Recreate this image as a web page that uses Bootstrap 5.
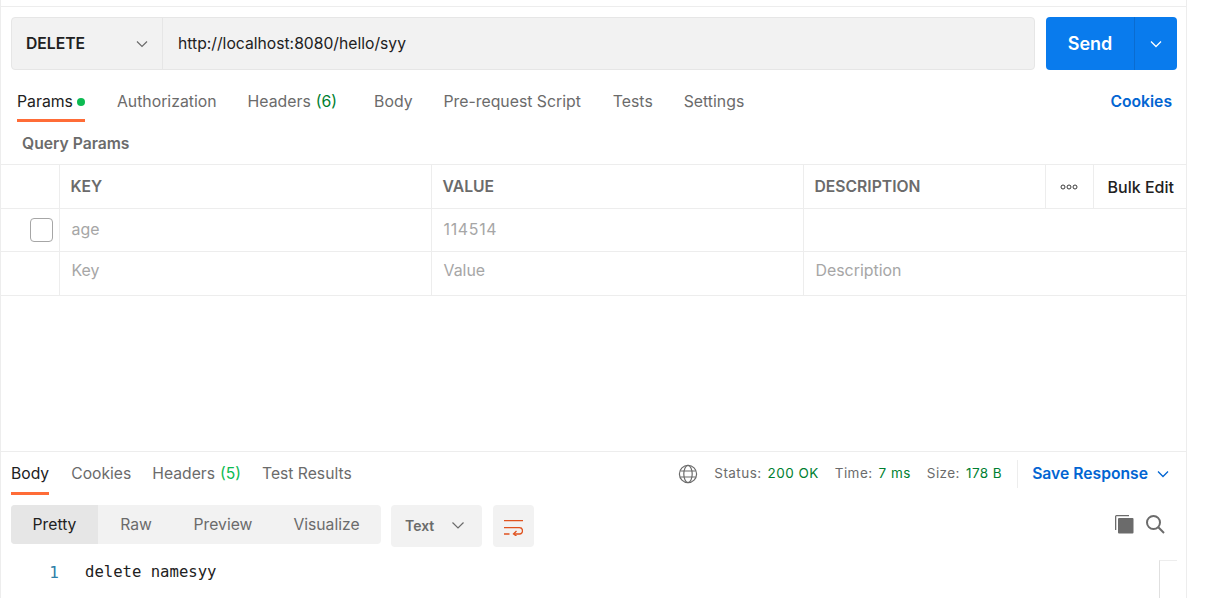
<!DOCTYPE html>
<html lang="en">
<head>
    <meta charset="UTF-8">
    <meta name="viewport" content="width=device-width, initial-scale=1.0">
    <title>Postman</title>
    <link href="https://cdn.jsdelivr.net/npm/bootstrap@5.3.0/dist/css/bootstrap.min.css" rel="stylesheet">
    <style>
        html, body { height: 100%; overflow: hidden; background: #fff; }
        body { font-family: Inter, "Noto Sans", sans-serif; font-size: 15.7px; color: #6b6b6b; }
        svg { display: block; flex: none; }

        .app-frame { width: 1187px; height: 598px; overflow: hidden; border-left: 1px solid #ededed; border-right: 1px solid #ededed; }
        .top-strip { height: 7px; border-bottom: 1px solid #ededed; margin-left: -1px; }

        .url-row { height: 53px; margin: 10px 9px 0 10px; }
        .url-box { background: #f2f2f2; border: 1px solid #e6e6e6; border-radius: 4px; width: 1024px; }
        .method-pick { width: 151px; border-right: 1px solid #e6e6e6; padding: 0 13px 0 14px; color: #212121; font-weight: 600; }
        .url-text { padding-left: 15px; color: #212121; }
        .send-btn { width: 131px; margin-left: 11px; background: #097bed; color: #fff; border-radius: 4px; font-size: 18px; font-weight: 600; }
        .send-main { width: 89px; border-right: 1px solid #0a6cd0; }

        .req-tabs { height: 52px; padding: 0 14px 0 16px; font-size: 15.8px; }
        .tab-item { display: flex; align-items: center; height: 100%; position: relative; padding-top: 12px; padding-bottom: 0; white-space: nowrap; }
        .tab-on { color: #212121; }
        .tab-on::after { content: ""; position: absolute; left: 0; right: 0; bottom: 0; height: 3px; background: #ff6c37; }
        .tab-auth { margin-left: 32px; }
        .tab-gap { margin-left: 31px; }
        .tab-gap-wide { margin-left: 37px; }
        .tab-gap-pre { margin-left: 32px; }
        .green-dot { width: 8px; height: 8px; border-radius: 50%; background: #0cbb52; margin-left: 4px; }
        .count-dark { color: #007f31; margin-left: 5px; }
        .count-light { color: #0cbb52; margin-left: 5px; }
        .cookies-link { color: #0265d2; font-weight: 600; margin-left: auto; padding-top: 12px; font-size: 15.7px; }

        .query-title { height: 42px; padding: 10px 0 0 21px; font-weight: 600; }

        .param-table { table-layout: fixed; width: 1185px; border-top: 1px solid #ededed; margin: 0; color: #6b6b6b; }
        .param-table > :not(caption) > * > * { border-color: #ededed; padding: 0 11px; vertical-align: middle; color: inherit; background: transparent; box-shadow: none; }
        .param-table td, .param-table th { border-right: 1px solid #ededed; border-bottom: 1px solid #ededed; }
        .param-table td:last-child, .param-table th:last-child { border-right: 0; }
        .param-table thead tr { height: 44px; }
        .param-table tbody tr.row-a { height: 43px; }
        .param-table tbody tr.row-b { height: 44px; }
        .param-table tbody tr.row-b td { padding-bottom: 6px; }
        .param-table th { font-weight: 600; }
        .param-table td { color: #a6a6a6; padding-left: 12px; font-size: 15.9px; }
        .param-table .num-cell { letter-spacing: .7px; }
        .param-table .bulk-cell { color: #212121; font-weight: 500; font-size: 16px; white-space: nowrap; padding: 0 0 0 14px; }
        .param-table .dots-cell { padding: 0; }
        .param-table .check-cell { padding: 0 6px 0 0; }
        .fake-check { width: 23px; height: 24px; border: 1px solid #a6a6a6; border-radius: 4px; margin-left: auto; }

        .param-spacer { height: 156px; border-bottom: 1px solid #ededed; }

        .res-tabs { height: 43px; padding: 0 16px 0 10px; }
        .res-tabs .tab-item { padding-top: 1px; padding-bottom: 0; }
        .res-tab-gap { margin-left: 22px; }
        .res-tab-gap-b { margin-left: 21px; }
        .res-meta { margin-left: auto; font-size: 13.5px; letter-spacing: .45px; }
        .globe-icon { margin-right: 16px; }
        .meta-ok { color: #007f31; margin-left: 6px; }
        .meta-pair { margin-left: 16px; }
        .meta-rule { width: 1px; height: 28px; background: #ededed; margin: 0 14px 0 15px; }
        .save-link { color: #0265d2; font-weight: 600; font-size: 15.7px; letter-spacing: 0; }

        .view-row { height: 39px; margin: 10px 10px 0 10px; }
        .seg-group { width: 370px; background: #f2f2f2; border-radius: 4px; height: 100%; }
        .seg-on { background: #e6e6e6; color: #212121; width: 87px; border-radius: 4px 0 0 4px; }
        .seg-item { text-align: center; }
        .seg-raw { width: 76px; }
        .seg-preview { width: 98px; }
        .seg-visual { width: 109px; }
        .lang-pick { width: 91px; height: 42px; background: #f2f2f2; border-radius: 4px; margin-left: 10px; padding: 0 17px 2px 14px; font-size: 14px; font-weight: 600; }
        .wrap-btn { width: 41px; height: 42px; background: #f2f2f2; border-radius: 4px; margin-left: 11px; padding-top: 4px; }
        .tool-icons { margin-left: auto; margin-right: 11px; margin-bottom: 2px; gap: 11px; }

        .code-row { margin-top: 17px; height: 40px; position: relative; font-family: "DejaVu Sans Mono", monospace; font-size: 15.6px; color: #212121; }
        .line-no { width: 58px; text-align: right; color: #2f7fa8; font-size: 16px; }
        .code-text { margin-left: 26px; white-space: pre; }
        .scroll-stub { position: absolute; right: 9px; top: -1px; width: 18px; height: 44px; border-left: 1px solid #e0e0e0; border-top: 1px solid #ededed; }
    </style>
</head>
<body>
    <div class="app-frame">
        <div class="top-strip"></div>

        <div class="url-row d-flex">
            <div class="url-box d-flex">
                <div class="method-pick d-flex align-items-center justify-content-between">
                    <span>DELETE</span>
                    <svg width="14" height="14" viewBox="0 0 14 14" fill="none" stroke="#6b6b6b" stroke-width="1.2"><path d="M2 4.500l5 5 5-5"/></svg>
                </div>
                <div class="url-text d-flex align-items-center">http://localhost:8080/hello/syy</div>
            </div>
            <div class="send-btn d-flex">
                <div class="send-main d-flex align-items-center justify-content-center">Send</div>
                <div class="flex-grow-1 d-flex align-items-center justify-content-center">
                    <svg width="14" height="14" viewBox="0 0 14 14" fill="none" stroke="#fff" stroke-width="1.3"><path d="M2 4.500l5 5 5-5"/></svg>
                </div>
            </div>
        </div>

        <div class="req-tabs d-flex align-items-center">
            <div class="tab-item tab-on">Params<span class="green-dot"></span></div>
            <div class="tab-item tab-auth">Authorization</div>
            <div class="tab-item tab-gap">Headers<span class="count-dark">(6)</span></div>
            <div class="tab-item tab-gap-wide">Body</div>
            <div class="tab-item tab-gap">Pre-request Script</div>
            <div class="tab-item tab-gap-pre">Tests</div>
            <div class="tab-item tab-gap">Settings</div>
            <div class="cookies-link">Cookies</div>
        </div>

        <div class="query-title">Query Params</div>

        <table class="table param-table">
            <colgroup>
                <col style="width:58px"><col style="width:372px"><col style="width:372px"><col style="width:242px"><col style="width:48px"><col>
            </colgroup>
            <thead>
                <tr>
                    <th></th>
                    <th>KEY</th>
                    <th>VALUE</th>
                    <th>DESCRIPTION</th>
                    <th class="dots-cell">
                        <svg class="mx-auto" width="18" height="6" viewBox="0 0 18 6" fill="none" stroke="#3a3a3a" stroke-width="1"><circle cx="3" cy="3" r="2"/><circle cx="9" cy="3" r="2"/><circle cx="15" cy="3" r="2"/></svg>
                    </th>
                    <th class="bulk-cell">Bulk Edit</th>
                </tr>
            </thead>
            <tbody>
                <tr class="row-a">
                    <td class="check-cell"><div class="fake-check"></div></td>
                    <td>age</td>
                    <td class="num-cell">114514</td>
                    <td colspan="3"></td>
                </tr>
                <tr class="row-b">
                    <td></td>
                    <td>Key</td>
                    <td>Value</td>
                    <td colspan="3">Description</td>
                </tr>
            </tbody>
        </table>

        <div class="param-spacer"></div>

        <div class="res-tabs d-flex align-items-center">
            <div class="tab-item tab-on">Body</div>
            <div class="tab-item res-tab-gap">Cookies</div>
            <div class="tab-item res-tab-gap-b">Headers<span class="count-light">(5)</span></div>
            <div class="tab-item res-tab-gap-b">Test Results</div>
            <div class="res-meta d-flex align-items-center">
                <svg class="globe-icon" width="20" height="20" viewBox="0 0 20 20" fill="none" stroke="#6b6b6b" stroke-width="1.2"><circle cx="10" cy="10" r="8.600"/><ellipse cx="10" cy="10" rx="4.200" ry="8.600"/><path d="M2.200 7h15.600M2.200 13h15.600"/></svg>
                <span>Status:<span class="meta-ok">200 OK</span></span>
                <span class="meta-pair">Time:<span class="meta-ok">7 ms</span></span>
                <span class="meta-pair">Size:<span class="meta-ok">178 B</span></span>
                <span class="meta-rule"></span>
                <span class="save-link">Save Response</span>
                <svg class="ms-2" width="14" height="14" viewBox="0 0 14 14" fill="none" stroke="#0265d2" stroke-width="1.3"><path d="M2 4.500l5 5 5-5"/></svg>
            </div>
        </div>

        <div class="view-row d-flex">
            <div class="seg-group d-flex align-items-center">
                <div class="seg-on h-100 d-flex align-items-center justify-content-center">Pretty</div>
                <div class="seg-item seg-raw">Raw</div>
                <div class="seg-item seg-preview">Preview</div>
                <div class="seg-item seg-visual">Visualize</div>
            </div>
            <div class="lang-pick d-flex align-items-center justify-content-between">
                <span>Text</span>
                <svg width="14" height="14" viewBox="0 0 14 14" fill="none" stroke="#6b6b6b" stroke-width="1.2"><path d="M1.500 4.500l5.500 5.500 5.500-5.500"/></svg>
            </div>
            <div class="wrap-btn d-flex align-items-center justify-content-center">
                <svg width="19" height="16" viewBox="0 0 19 16" fill="none" stroke="#e05320" stroke-width="1.300"><path d="M0 .700h19M0 7.700h15.500c4 0 4 6.300 0 6.300H10M0 14h5.500"/><path d="M12.500 11l-3 3 3 2"/></svg>
            </div>
            <div class="tool-icons d-flex align-items-center">
                <svg width="20" height="20" viewBox="0 0 20 20" fill="#6b6b6b"><path d="M1 16V2.500A1.500 1.500 0 0 1 2.500 1H15v1.300H2.300V16z"/><rect x="4" y="4" width="15.500" height="15.500" rx="1"/></svg>
                <svg width="20" height="20" viewBox="0 0 20 20" fill="none" stroke="#6b6b6b" stroke-width="2"><circle cx="8.500" cy="8.500" r="6.500"/><path d="M13.300 13.300L19 19"/></svg>
            </div>
        </div>

        <div class="code-row d-flex">
            <div class="line-no">1</div>
            <div class="code-text">delete namesyy</div>
            <div class="scroll-stub"></div>
        </div>
    </div>
    <script src="https://cdn.jsdelivr.net/npm/bootstrap@5.3.0/dist/js/bootstrap.bundle.min.js"></script>
</body>
</html>
